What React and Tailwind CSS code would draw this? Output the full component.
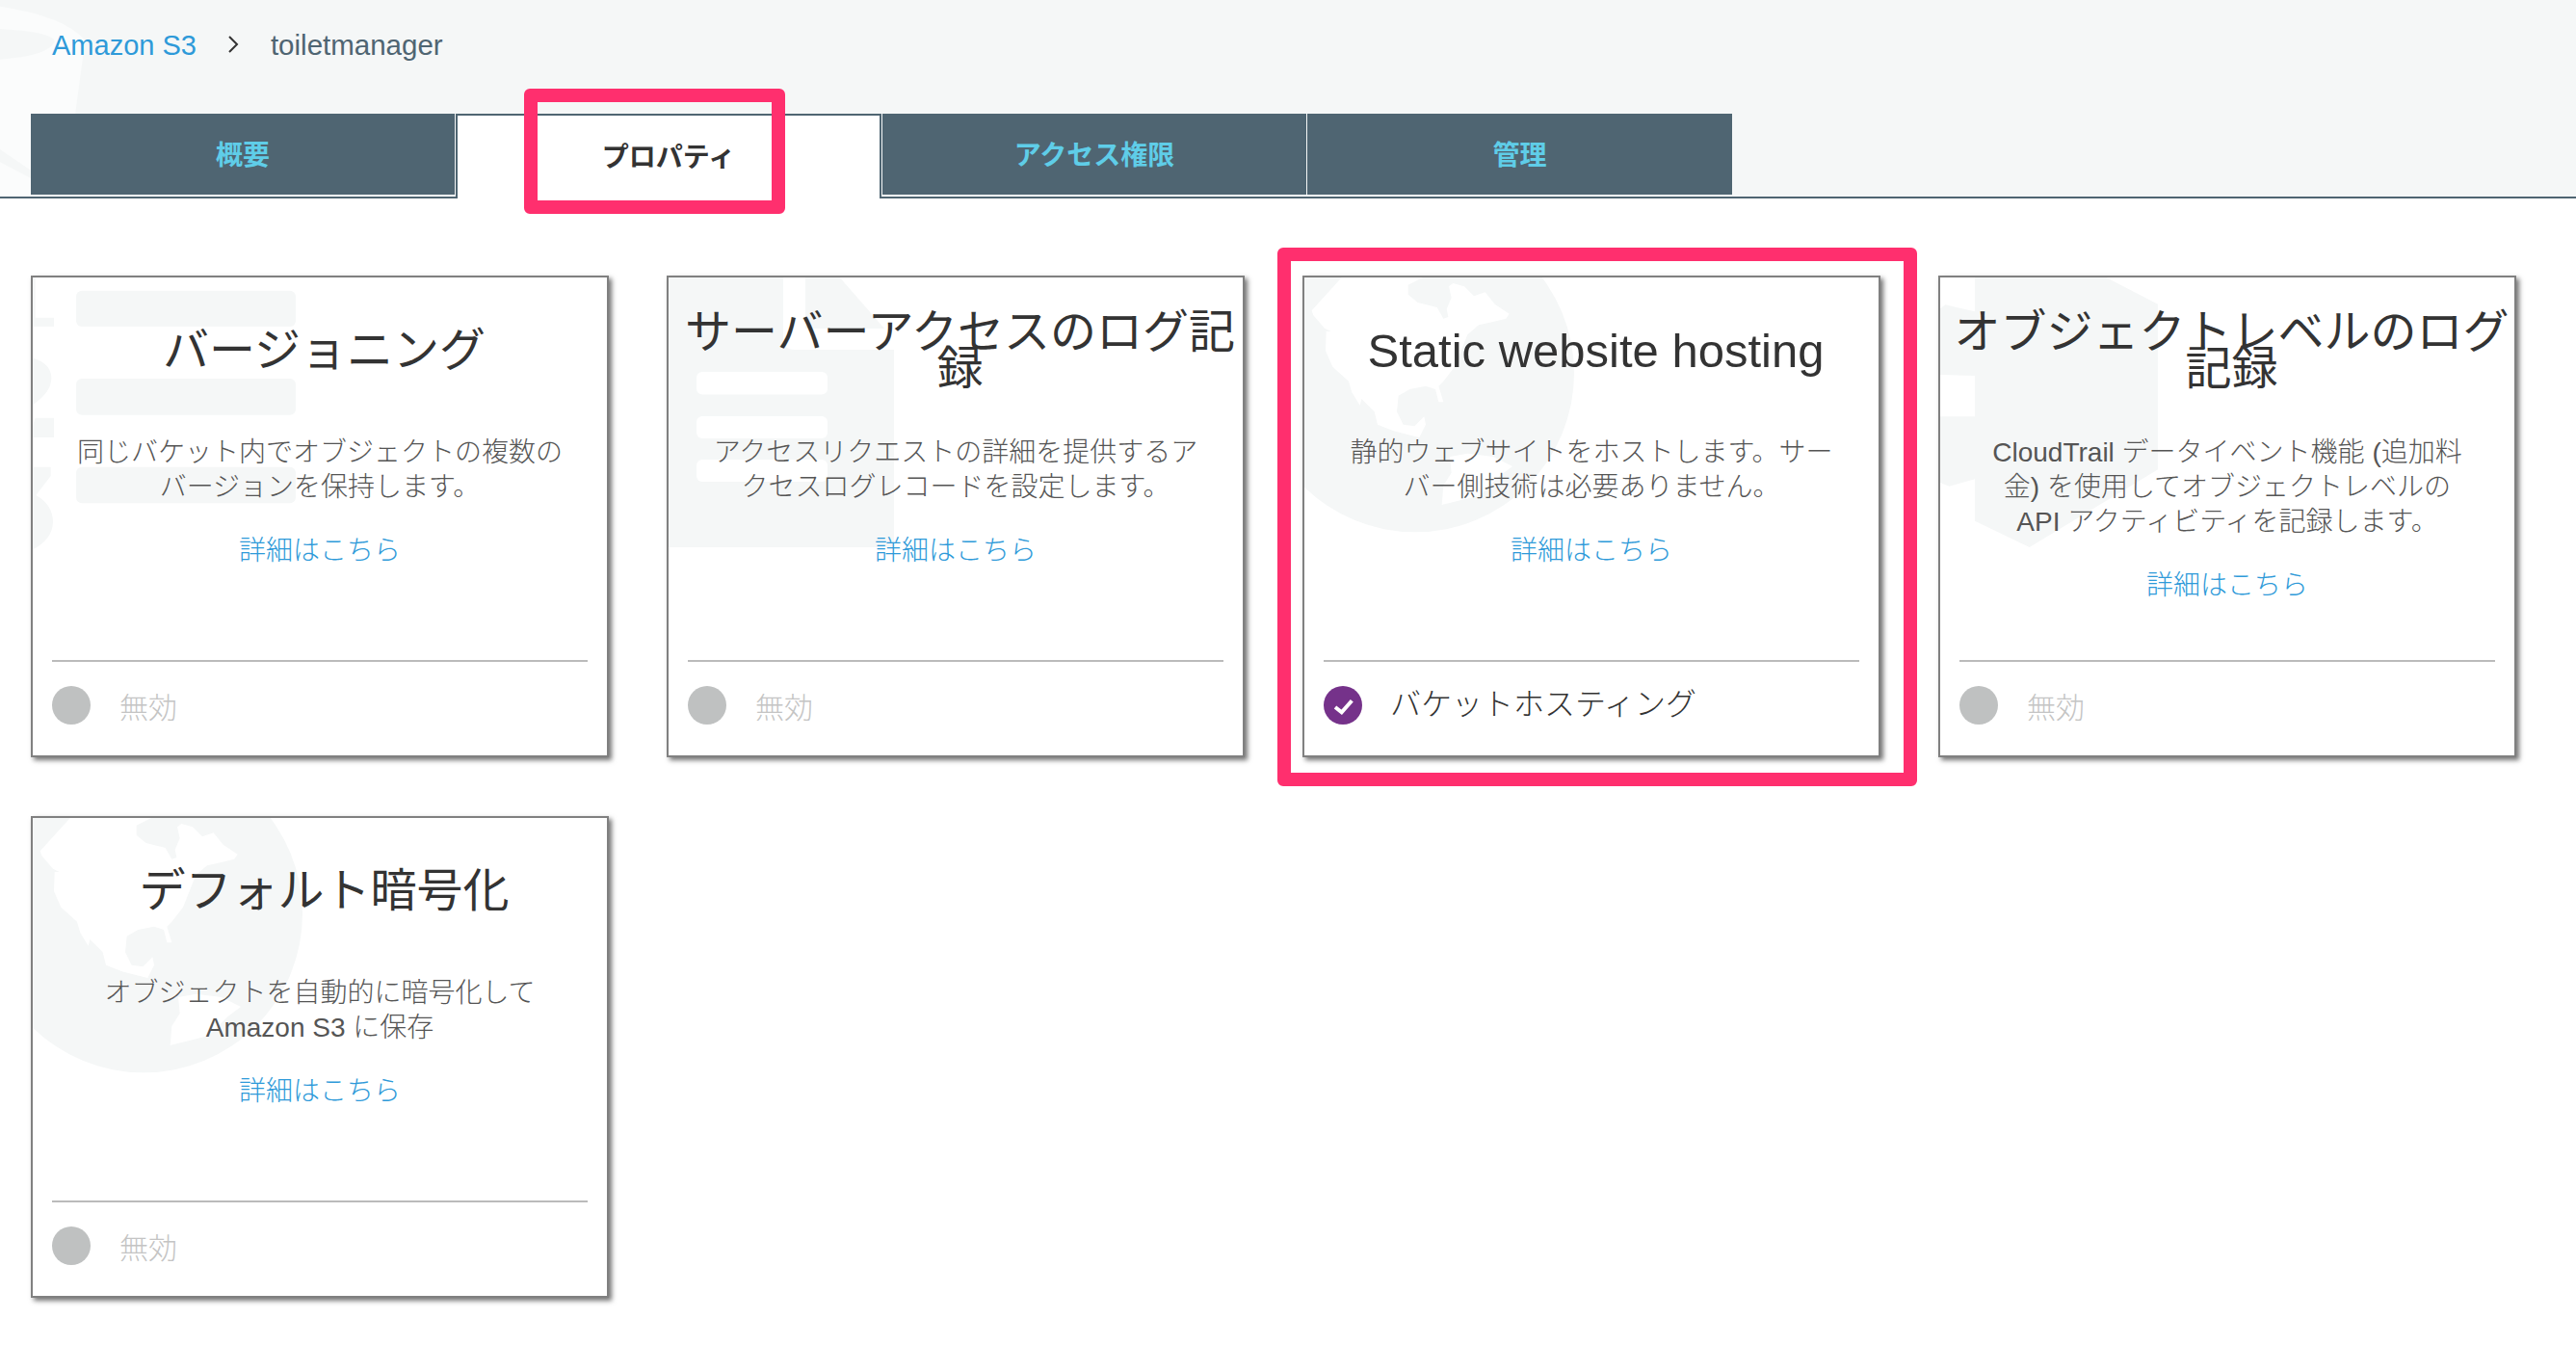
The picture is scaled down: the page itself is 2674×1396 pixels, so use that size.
import React from 'react';

const tabs = [
  { label: '概要', width: 'w-[440px] mr-px' },
  { label: 'プロパティ', active: true },
  { label: 'アクセス権限', width: 'w-[440px] ml-px' },
  { label: '管理', width: 'w-[441px] ml-px' },
];

// pale artwork behind each card, drawn in 3x pixels from the card corner
const Versions = () => (
  <svg viewBox="0 0 900 900" className="absolute left-[-4px] top-[-4px] w-[300px] h-[300px]" fill="#f5f7f7">
    <path d="M10 10H20V137H78V165H10Z" />
    <path d="M10 262Q70 280 70 325Q70 370 10 410Z" />
    <path d="M10 480L20 449H78V510H10Z" />
    <path d="M10 602H68V630L22 690Q75 720 75 775Q72 830 10 860Z" />
    <rect x="147" y="53" width="684" height="112" rx="18" />
    <rect x="147" y="327" width="684" height="113" rx="18" />
    <rect x="147" y="602" width="684" height="113" rx="18" />
  </svg>
);

const LogFile = () => (
  <svg viewBox="0 0 300 300" className="absolute left-[-2px] top-[-2px] w-[300px] h-[300px]" fill="#f5f7f7">
    <path d="M0 0H121V65Q121 77 133 77H236V282H0Z" />
    <path d="M144 0H178L226 55H144Z" />
    <rect x="31" y="100" width="136" height="23.5" rx="6" fill="#fff" />
    <rect x="31" y="146" width="136" height="23" rx="6" fill="#fff" />
    <rect x="31" y="191" width="136" height="23" rx="6" fill="#fff" />
  </svg>
);

const Globe = () => (
  <svg viewBox="0 0 900 900" className="absolute left-[-4px] top-[-4px] w-[300px] h-[300px]">
    <circle cx="357" cy="310" r="495" fill="#f5f7f7" />
    <path
      fill="#fff"
      d="M35 115L130 10H385L335 35V65L365 90L425 105L445 140L460 135L455 110L470 75L462 40L475 30L510 40L540 70L575 58L605 95L650 125L640 140L600 150L555 160L520 190L500 240L480 290L445 335L430 350L445 400H430L420 360L390 350L340 360L305 380L300 430L320 470L355 475L385 445L390 470L370 510L330 500L290 490L240 470L230 430L190 390L185 410L160 370L150 335L100 290L78 240L80 180H95L75 170L40 130Z"
    />
    <path fill="#fff" d="M465 570L520 560L600 570L660 600L620 630L560 690L440 720L445 660L470 620Z" />
  </svg>
);

const Trail = () => (
  <svg viewBox="0 0 900 900" className="absolute left-[-4px] top-[-4px] w-[300px] h-[300px]" fill="#f5f7f7">
    <path d="M120 10H525L690 95V610L290 852L120 770V640L40 662L10 650V445H120V318L10 315V110L28 97L120 118Z" />
  </svg>
);

const cards = [
  {
    art: <Versions />,
    title: ['バージョニング'],
    desc: ['同じバケット内でオブジェクトの複数の', 'バージョンを保持します。'],
  },
  {
    art: <LogFile />,
    title: ['サーバーアクセスのログ記', '録'],
    desc: ['アクセスリクエストの詳細を提供するア', 'クセスログレコードを設定します。'],
  },
  {
    art: <Globe />,
    title: ['Static website hosting'],
    titleClass: 'text-[49px]',
    desc: ['静的ウェブサイトをホストします。サー', 'バー側技術は必要ありません。'],
    enabled: 'バケットホスティング',
    marked: true,
  },
  {
    art: <Trail />,
    title: ['オブジェクトレベルのログ', '記録'],
    desc: ['CloudTrail データイベント機能 (追加料', '金) を使用してオブジェクトレベルの', 'API アクティビティを記録します。'],
  },
  {
    art: <Globe />,
    title: ['デフォルト暗号化'],
    desc: ['オブジェクトを自動的に暗号化して', 'Amazon S3 に保存'],
  },
];

const Card = ({ card }) => (
  <div className="relative h-[500px] border-2 border-[#808080] bg-white shadow-[3px_3px_5px_rgba(0,0,0,0.55)] flex flex-col">
    <div className="absolute inset-0 overflow-hidden">{card.art}</div>

    <div className={`relative h-[151px] pl-[9px] flex flex-col justify-center text-center leading-[38px] text-[#333333] ${card.titleClass || 'text-[48px]'}`}>
      {card.title.map((line) => (
        <div key={line} className="whitespace-nowrap">{line}</div>
      ))}
    </div>

    <div className="relative mt-[13px] text-center text-[28px] leading-[36px] font-light text-[#555555]">
      {card.desc.map((line) => (
        <div key={line} className="whitespace-nowrap">{line}</div>
      ))}
    </div>

    <a className="relative mt-[30px] block text-center text-[28px] leading-[36px] font-light text-[#2e9ad9]">詳細はこちら</a>

    <div className="relative mt-auto mx-[20px] h-[99px] border-t-2 border-[#bbbbbb] pt-[25px] flex items-start">
      {card.enabled ? (
        <>
          <svg viewBox="0 0 40 40" className="w-[40px] h-[40px] shrink-0">
            <circle cx="20" cy="20" r="20" fill="#75328a" />
            <path d="M12 22L18.7 27.3L29.3 15.3" fill="none" stroke="#fff" strokeWidth="4" />
          </svg>
          <span className="ml-[29px] text-[32px] leading-[39px] font-light text-[#333333] whitespace-nowrap">{card.enabled}</span>
        </>
      ) : (
        <>
          <div className="w-[40px] h-[40px] rounded-full bg-[#bfc1c1] shrink-0" />
          <span className="ml-[30px] text-[30px] leading-[45px] font-light text-[#c4c4c4]">無効</span>
        </>
      )}
    </div>

    {card.marked && (
      <div className="absolute left-[-28px] right-[-40px] top-[-31px] bottom-[-32px] border-[14px] border-[#ff2f6e] rounded-[6px] pointer-events-none" />
    )}
  </div>
);

const App = () => {
  return (
    <div className="min-h-screen bg-white font-['Liberation_Sans','Noto_Sans_CJK_JP',sans-serif]">
      <div className="relative h-[206px] bg-[#f5f7f7] border-b-2 border-[#4f6572]">
        {/* bucket watermark behind the breadcrumb */}
        <svg viewBox="0 0 300 612" className="absolute left-0 top-0 w-[100px] h-[204px]">
          <path d="M0 20Q200 50 265 125L235 350L225 612H0Z" fill="#fbfcfc" />
          <path d="M0 90Q170 100 170 130Q150 175 0 185Z" fill="#f5f7f7" />
          <path d="M0 465L96 530V555L0 505Z" fill="#f5f7f7" />
        </svg>

        <div className="relative h-[118px] pl-[54px] pt-[30px] flex items-start text-[29px] leading-[34px]">
          <a className="text-[#2e9ad9]">Amazon S3</a>
          <svg viewBox="0 0 12 18" className="ml-[32px] mt-[7px] w-[12px] h-[18px]">
            <path d="M2 1L10 9L2 17" fill="none" stroke="#333333" strokeWidth="2" />
          </svg>
          <span className="ml-[33px] text-[29.5px] text-[#4f6572]">toiletmanager</span>
        </div>

        <div className="relative flex h-[86px] pl-[32px]">
          {tabs.map((tab) =>
            tab.active ? (
              <div
                key={tab.label}
                className="w-[442px] h-[88px] pt-[1px] border-2 border-b-0 border-[#4f6572] bg-white flex items-center justify-center text-[28px] font-bold text-[#333333]"
              >
                {tab.label}
              </div>
            ) : (
              <div
                key={tab.label}
                className={`${tab.width} h-[86px] pt-[3px] border-b-2 border-white bg-[#4f6572] flex items-center justify-center text-[28px] font-bold text-[#5fcde8]`}
              >
                {tab.label}
              </div>
            )
          )}
        </div>

        <div className="absolute left-[544px] top-[92px] w-[271px] h-[130px] border-[14px] border-[#ff2f6e] rounded-[6px] pointer-events-none" />
      </div>

      <div className="grid grid-cols-[repeat(4,600px)] gap-x-[60px] gap-y-[61px] pl-[32px] pt-[80px]">
        {cards.map((card) => (
          <Card key={card.title[0]} card={card} />
        ))}
      </div>
    </div>
  );
};

export default App;
